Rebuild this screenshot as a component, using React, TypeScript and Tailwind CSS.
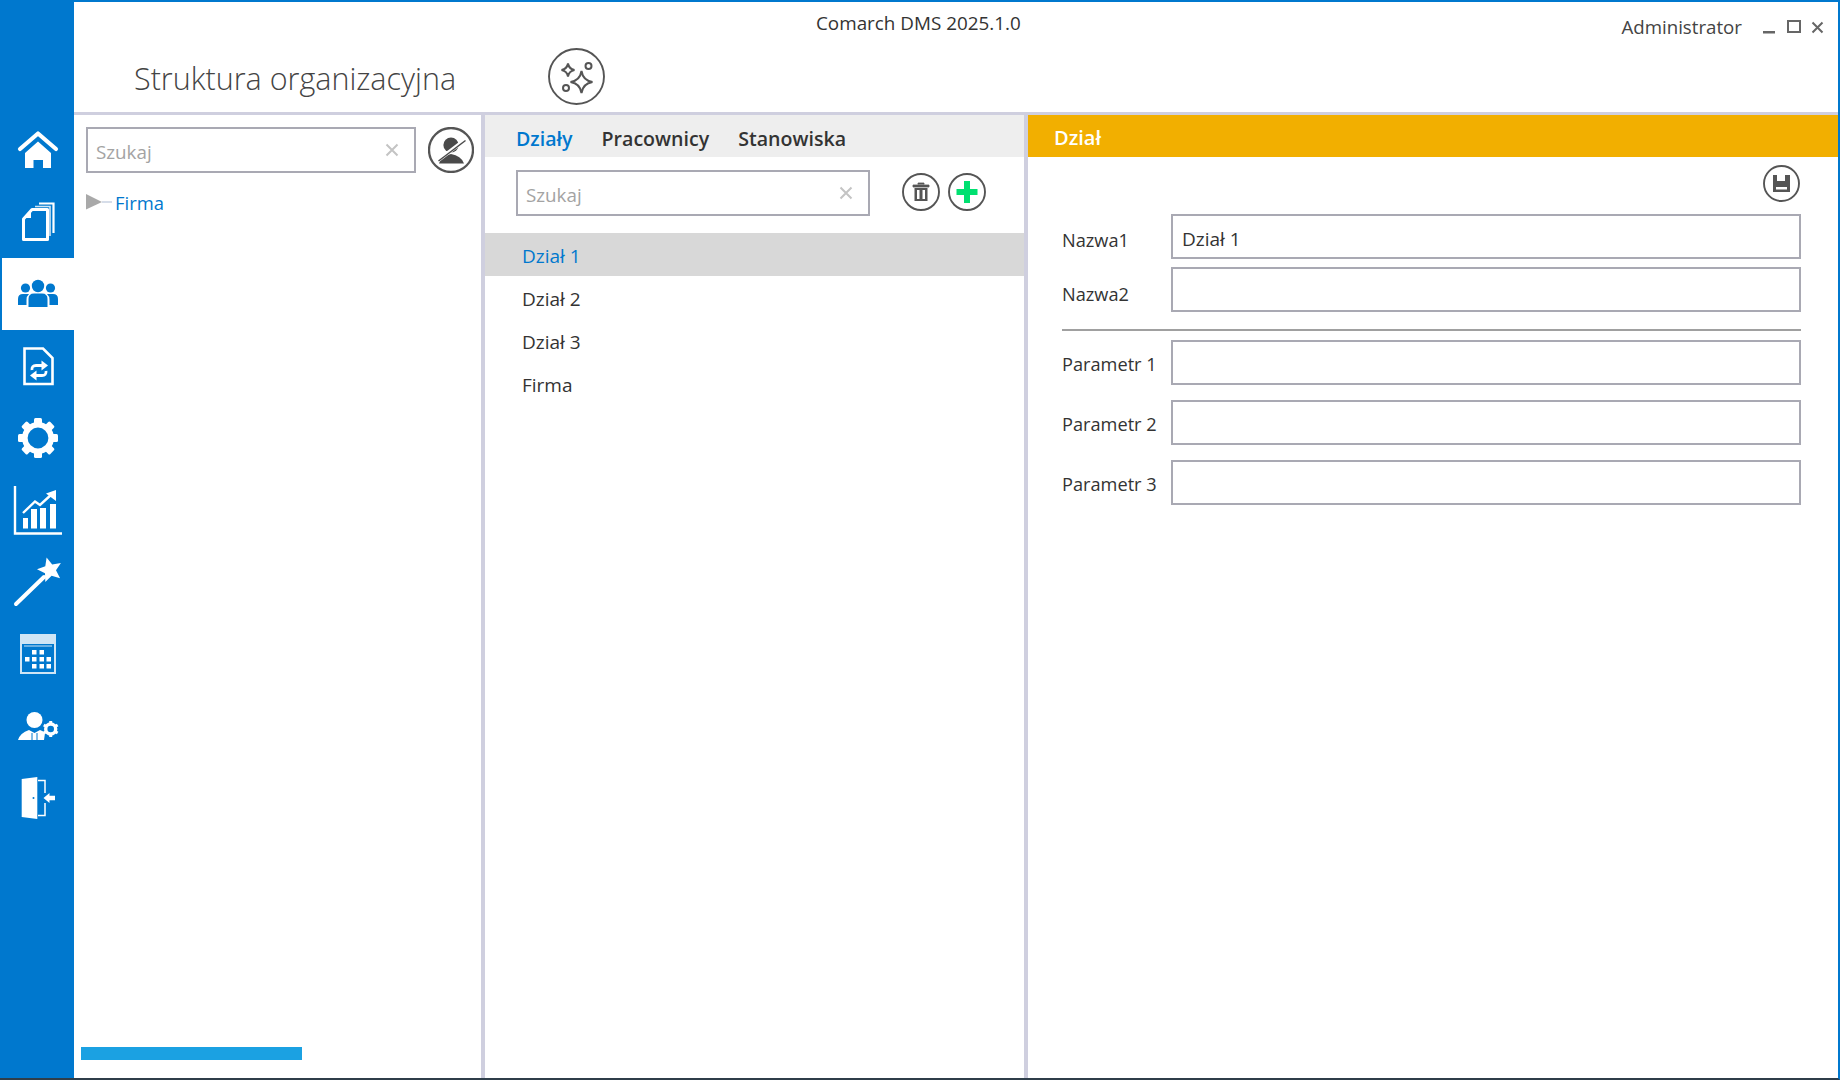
import React from "react";

const B = "#0078ce";

function Cell({ children, active }: { children: React.ReactNode; active?: boolean }) {
  return (
    <div className={active ? "h-[72px] w-[74px] border-l-2 border-[#0078ce] bg-white" : "h-[72px] w-[74px]"}>
      <svg width={active ? 72 : 74} height={72} viewBox={active ? "2 0 72 72" : "0 0 74 72"} className="block">
        {children}
      </svg>
    </div>
  );
}

function Home() {
  return (
    <Cell>
      <polyline points="20,35 38,19.5 56,35" fill="none" stroke="#fff" strokeWidth="4.2" strokeLinecap="round" strokeLinejoin="round" />
      <path d="M25 39 L38 27.5 L51 39 V54 H43 V46 H33.5 V54 H25 Z" fill="#fff" />
    </Cell>
  );
}
function Docs() {
  return (
    <Cell>
      <path d="M39 17.5 H53.5 V47" fill="none" stroke="#fff" strokeWidth="2.2" />
      <path d="M35 20.5 H50 V50" fill="none" stroke="#cfe5f5" strokeWidth="1.6" />
      <path d="M32 23.5 H47.5 V53.5 H23.5 V33 Z" fill="none" stroke="#fff" strokeWidth="3" strokeLinejoin="round" />
      <path d="M31 24 V32 H24 Z" fill="#fff" />
    </Cell>
  );
}
function Users() {
  return (
    <Cell active>
      <g fill={B}>
        <circle cx="38" cy="28" r="6.2" />
        <circle cx="25.5" cy="30" r="4.6" />
        <circle cx="50.5" cy="30" r="4.6" />
        <path d="M28.5 49 V41 Q28.5 35.5 34 35.5 H42 Q47.5 35.5 47.5 41 V49 Z" />
        <path d="M18 47 V41 Q18 36 23 36 H29 Q26.5 38 26.5 42 V47 Z" />
        <path d="M58 47 V41 Q58 36 53 36 H47 Q49.5 38 49.5 42 V47 Z" />
      </g>
    </Cell>
  );
}
function Sync() {
  return (
    <Cell>
      <path d="M24.5 18.5 H43 L52.5 28 V54 H24.5 Z" fill="none" stroke="#fff" strokeWidth="2.6" />
      <path d="M32 40 Q31.5 35.5 36 35.5 H43" fill="none" stroke="#fff" strokeWidth="2.8" />
      <path d="M41.5 30.5 L48 35.5 L41.5 40.5 Z" fill="#fff" />
      <path d="M46 41 Q46.5 45.5 42 45.5 H35" fill="none" stroke="#fff" strokeWidth="2.8" />
      <path d="M36.5 40.5 L30 45.5 L36.5 50.5 Z" fill="#fff" />
    </Cell>
  );
}
function Gear() {
  return (
    <Cell>
      <circle cx="38" cy="36" r="13.2" fill="none" stroke="#fff" strokeWidth="5.6" />
      <g fill="#fff">
        {[0, 45, 90, 135, 180, 225, 270, 315].map((a) => (
          <rect key={a} x="34" y="16" width="8" height="6.5" rx="1.5" transform={`rotate(${a} 38 36)`} />
        ))}
      </g>
    </Cell>
  );
}
function Chart() {
  return (
    <Cell>
      <path d="M15 12 V59.5 H62" fill="none" stroke="#fff" strokeWidth="2.4" />
      <g fill="#fff">
        <rect x="23" y="44" width="5" height="10.5" />
        <rect x="31" y="35" width="6" height="19.5" />
        <rect x="40" y="34" width="6" height="20.5" />
        <rect x="50" y="30" width="6" height="24.5" />
      </g>
      <path d="M23 39 L35 27.5 L40 31 L52 20" fill="none" stroke="#fff" strokeWidth="2.4" />
      <path d="M46 19.5 L56 16 L56 27 Z" fill="#fff" />
    </Cell>
  );
}
function Wand() {
  return (
    <Cell>
      <line x1="16" y1="58" x2="44" y2="31" stroke="#fff" strokeWidth="4" strokeLinecap="round" />
      <polygon points="46.6,11.4 52.2,18.4 60.9,16.9 56,24.3 60.1,32.2 51.6,29.8 45.3,36.1 45,27.3 37,23.3 45.3,20.2" fill="#fff" />
    </Cell>
  );
}
function Calendar() {
  const cells = [
    [32, 32], [39.5, 32],
    [25, 39], [32, 39], [39.5, 39], [46.5, 39],
    [32, 46], [39.5, 46], [46.5, 46],
  ];
  return (
    <Cell>
      <rect x="21" y="17" width="34" height="38" fill="none" stroke="#cfe5f5" strokeWidth="2" />
      <rect x="21" y="17" width="34" height="9" fill="#cfe5f5" />
      <line x1="24" y1="28" x2="52" y2="28" stroke="#cfe5f5" strokeWidth="1" />
      {cells.map(([x, y]) => (
        <rect key={`${x}-${y}`} x={x} y={y} width="4.5" height="4.5" fill="#fff" />
      ))}
    </Cell>
  );
}
function Admin() {
  return (
    <Cell>
      <circle cx="34.5" cy="30" r="8" fill="#fff" />
      <path d="M18 50 Q20 43 29 40 L34.5 43 L40 40 Q43 41 45 43 L44 50 Z" fill="#fff" />
      <path d="M32 43 V50 M37 43 V50" stroke={B} strokeWidth="1" />
      <circle cx="50.7" cy="39" r="5" fill="none" stroke="#fff" strokeWidth="3.4" />
      <g fill="#fff">
        {[0, 60, 120, 180, 240, 300].map((a) => (
          <rect key={a} x="49.2" y="31" width="3" height="3" transform={`rotate(${a} 50.7 39)`} />
        ))}
      </g>
    </Cell>
  );
}
function Exit() {
  return (
    <Cell>
      <polygon points="21.7,17 37.3,15 37.3,57 21.7,55" fill="#fff" />
      <circle cx="33.5" cy="36" r="1" fill={B} />
      <path d="M38 18.5 H45 V31 M45 41 V53.5 H38" fill="none" stroke="#fff" strokeWidth="1.5" />
      <path d="M43.5 36 L49.5 31 V33.8 H55 V38.2 H49.5 V41 Z" fill="#fff" />
    </Cell>
  );
}

function RoundIcon({ size, children, stroke = 1.9 }: { size: number; children: React.ReactNode; stroke?: number }) {
  return (
    <svg width={size} height={size} viewBox={`0 0 ${size} ${size}`} className="block shrink-0">
      <circle cx={size / 2} cy={size / 2} r={size / 2 - 1} fill="none" stroke="#555555" strokeWidth={stroke} />
      {children}
    </svg>
  );
}

function Search({ w }: { w: string }) {
  return (
    <div className={`flex h-[46px] ${w} items-center border-2 border-[#a9a9b3] bg-white pl-[8px] pr-[15px]`}>
      <input placeholder="Szukaj" readOnly className="min-w-0 flex-1 pt-[5px] text-[18.8px] text-[#333] outline-none placeholder:text-[#a3a3a3]" />
      <svg width="14" height="14" viewBox="0 0 14 14" className="shrink-0">
        <path d="M1.5 1.5 L12.5 12.5 M12.5 1.5 L1.5 12.5" stroke="#c4c4c4" strokeWidth="2" />
      </svg>
    </div>
  );
}

function Field({ label, value, top, labelOffset }: { label: string; value?: string; top: string; labelOffset: string }) {
  return (
    <div className={`flex items-center ${top}`}>
      <div className={`w-[109px] shrink-0 text-[18.2px] text-[#333] ${labelOffset}`}>{label}</div>
      <input
        readOnly
        value={value ?? ""}
        className="h-[45px] min-w-0 flex-1 border-2 border-[#a9a9b3] bg-white pl-[9px] pt-[4px] text-[19px] text-[#333] outline-none"
      />
    </div>
  );
}

export default function App() {
  return (
    <div className="flex h-[1080px] w-[1840px] overflow-hidden border-t-2 border-r-2 border-b-2 border-t-[#0078ce] border-r-[#0078ce] border-b-[#2f3e4a] bg-white font-['Open_Sans',sans-serif] text-[#333]">
      <aside className="w-[74px] shrink-0 bg-[#0078ce] pt-[112px]">
        <Home />
        <Docs />
        <Users />
        <Sync />
        <Gear />
        <Chart />
        <Wand />
        <Calendar />
        <Admin />
        <Exit />
      </aside>

      <div className="flex min-w-0 flex-1 flex-col">
        <header className="h-[113px] shrink-0 border-b-[3px] border-[#cfcfdf]">
          <div className="flex h-[45px] items-start">
            <div className="ml-[742px] pt-[8px] text-[18.85px] leading-[26px] text-[#333]">Comarch DMS 2025.1.0</div>
            <div className="ml-auto flex items-center pt-[12px]">
              <span className="text-[18.7px] leading-[26px] text-[#444]">Administrator</span>
              <svg width="62" height="16" viewBox="0 0 62 16" className="ml-[20px] mr-[14px] block">
                <rect x="1" y="12" width="12" height="2.5" fill="#666" />
                <rect x="26" y="2" width="12" height="11" fill="none" stroke="#666" strokeWidth="2" />
                <path d="M50.5 3.5 L60.5 13.5 M60.5 3.5 L50.5 13.5" stroke="#666" strokeWidth="2" />
              </svg>
            </div>
          </div>
          <div className="flex h-[57px] items-center pl-[60px]">
            <h1 className="w-[414px] pt-[6px] text-[30.5px] font-light text-[#444]">Struktura organizacyjna</h1>
            <div className="mt-[2px]">
              <RoundIcon size={57}>
                <g fill="none" stroke="#555" strokeWidth="2">
                  <path d="M33.5 23 Q35 32.5 44.5 34 Q35 35.5 33.5 45 Q32 35.5 22.5 34 Q32 32.5 33.5 23 Z" />
                  <path d="M20 15.5 Q21 21 26.5 22 Q21 23 20 28.5 Q19 23 13.5 22 Q19 21 20 15.5 Z" />
                  <circle cx="40.5" cy="18" r="3" />
                  <circle cx="18" cy="40" r="3" />
                </g>
              </RoundIcon>
            </div>
          </div>
        </header>

        <main className="flex min-h-0 flex-1">
          <section className="flex w-[411px] shrink-0 flex-col border-r-4 border-[#cfcfdf]">
            <div className="flex items-center pl-[12px] pt-[12px]">
              <Search w="w-[330px]" />
              <div className="ml-[12px]">
                <RoundIcon size={46} stroke={2.3}>
                  <circle cx="23" cy="18" r="7.6" fill="#4a4a4a" />
                  <path d="M11 36.5 Q13 28.5 23 27 Q33 28.5 36 36.5 Z" fill="#4a4a4a" />
                  <path d="M8.5 34.5 L37.5 12.5" stroke="#fff" strokeWidth="4" />
                  <path d="M10.5 34 L37.5 13.5" stroke="#4a4a4a" strokeWidth="1.5" />
                </RoundIcon>
              </div>
            </div>
            <div className="mt-[21px] flex h-[16px] items-center pl-[12px]">
              <svg width="30" height="16" viewBox="0 0 30 16" className="block shrink-0">
                <polygon points="0,0 16,8 0,15.5" fill="#a9a9a9" />
                <line x1="16" y1="8" x2="26" y2="8" stroke="#c5cfe0" strokeWidth="1.4" />
              </svg>
              <span className="-ml-[1px] pt-[2px] text-[18.4px] leading-[24px] text-[#0078ce]">Firma</span>
            </div>
            <div className="mb-[18px] ml-[7px] mt-auto h-[13px] w-[221px] bg-[#1ba1e2]" />
          </section>

          <section className="flex w-[543px] shrink-0 flex-col border-r-4 border-[#cfcfdf]">
            <nav className="flex h-[42px] shrink-0 items-center bg-[#eeeeee] pl-[31px] pt-[5px] text-[19.6px] font-semibold">
              <span className="text-[#0078ce]">Działy</span>
              <span className="ml-[29px] text-[#333]">Pracownicy</span>
              <span className="ml-[29px] text-[#333]">Stanowiska</span>
            </nav>
            <div className="flex items-start pl-[31px] pt-[13px]">
              <Search w="w-[354px]" />
              <div className="ml-[32px] mt-[3px] flex gap-[8px]">
                <RoundIcon size={38}>
                  <path d="M16 11.5 V10 H22 V11.5 M11 12 H27 V14 H11 Z" fill="#555" stroke="#555" strokeWidth="0.8" />
                  <path d="M12.5 15 H25.5 V28 H12.5 Z M15 17 V26 H17.5 V17 Z M20.5 17 V26 H23 V17 Z" fill="#555" fillRule="evenodd" />
                </RoundIcon>
                <RoundIcon size={38}>
                  <path d="M16 8 H22 V16 H29.5 V22 H22 V30 H16 V22 H8.5 V16 H16 Z" fill="#00e070" />
                </RoundIcon>
              </div>
            </div>
            <ul className="mt-[17px] text-[19px]">
              <li className="flex h-[43px] items-center bg-[#d8d8d8] pl-[37px] pt-[3px] text-[#0078ce]">Dział 1</li>
              <li className="flex h-[43px] items-center pl-[37px] pt-[3px]">Dział 2</li>
              <li className="flex h-[43px] items-center pl-[37px] pt-[3px]">Dział 3</li>
              <li className="flex h-[43px] items-center pl-[37px] pt-[3px]">Firma</li>
            </ul>
          </section>

          <section className="flex min-w-0 flex-1 flex-col">
            <div className="flex h-[42px] shrink-0 items-center bg-[#f2af00] pl-[26px] pt-[4px] text-[20px] font-semibold text-white">Dział</div>
            <div className="flex justify-end pr-[38px] pt-[8px]">
              <RoundIcon size={37}>
                <path d="M10 10 H14 V16 H22 V10 H27 V27 H10 Z M13 22 V24.5 H24 V22 Z" fill="#555" fillRule="evenodd" />
              </RoundIcon>
            </div>
            <div className="pl-[34px] pr-[37px]">
              <Field label="Nazwa1" value="Dział 1" top="mt-[12px]" labelOffset="pt-[9px]" />
              <Field label="Nazwa2" top="mt-[8px]" labelOffset="pt-[11px]" />
              <div className="mt-[17px] h-[2px] bg-[#a0a0a0]" />
              <Field label="Parametr 1" top="mt-[9px]" labelOffset="pt-[5px]" />
              <Field label="Parametr 2" top="mt-[15px]" labelOffset="pt-[5px]" />
              <Field label="Parametr 3" top="mt-[15px]" labelOffset="pt-[4px]" />
            </div>
          </section>
        </main>
      </div>
    </div>
  );
}
